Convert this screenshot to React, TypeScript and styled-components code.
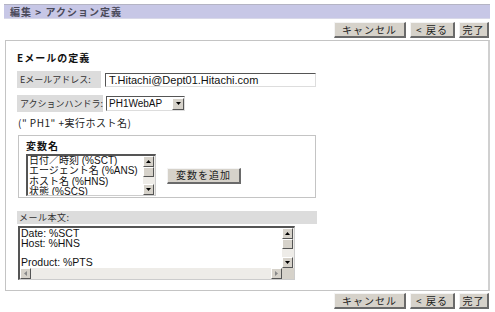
import React from "react";
import styled, { createGlobalStyle } from "styled-components";

const Global = createGlobalStyle`
  html, body { margin: 0; padding: 0; background: #fff; }
  body { font-family: "Liberation Sans", "Noto Sans CJK JP", sans-serif; font-size: 11px; color: #222; }
`;

const Page = styled.div`
  width: 495px;
  height: 312px;
  padding: 4px 5px 0 4px;
  box-sizing: border-box;
  display: flex;
  flex-direction: column;
`;

const Header = styled.div`
  height: 15px;
  background: #c7c7e6;
  border-top: 1px solid #b4b4c4;
  border-bottom: 1px solid #d8d8e8;
  display: flex;
  align-items: center;
  padding-left: 6px;
  font-family: "Noto Sans CJK JP", sans-serif;
  font-size: 10px;
  font-weight: bold;
  color: #4a4a5a;
  letter-spacing: 1px;
  white-space: nowrap;
  box-sizing: border-box;
`;

const Toolbar = styled.div<{ top?: number }>`
  display: flex;
  justify-content: flex-end;
  gap: 4px;
  padding-right: 1px;
  margin-top: ${(p) => p.top ?? 3}px;
`;

const Btn = styled.button<{ w: number }>`
  width: ${(p) => p.w}px;
  height: 16px;
  padding: 0;
  background: #d6d2ca;
  border-top: 1px solid #f4f4f4;
  border-left: 1px solid #f4f4f4;
  border-right: 2px solid #6a6a6a;
  border-bottom: 2px solid #6a6a6a;
  font-family: "Noto Sans CJK JP", sans-serif;
  font-size: 10px;
  color: #222;
  line-height: 12px;
  letter-spacing: 1px;
  white-space: nowrap;
`;

const Panel = styled.div`
  margin-top: 2px;
  margin-left: 1px;
  height: 251px;
  border: 1px solid #c4c4c4;
  border-right: 2px solid #d0d0d0;
  box-sizing: border-box;
  padding: 10px 0 0 11px;
  display: flex;
  flex-direction: column;
`;

const Title = styled.div`
  font-family: "Noto Sans CJK JP", sans-serif;
  font-weight: bold;
  font-size: 10px;
  letter-spacing: 1px;
  color: #111;
  height: 14px;
  line-height: 14px;
  white-space: nowrap;
`;

const FieldRow = styled.div<{ mt: number }>`
  display: flex;
  align-items: center;
  margin-top: ${(p) => p.mt}px;
`;

const Label = styled.div<{ w: number; h: number }>`
  width: ${(p) => p.w}px;
  height: ${(p) => p.h}px;
  background: #dcdcdc;
  display: flex;
  align-items: center;
  padding-left: 3px;
  box-sizing: border-box;
  font-family: "Noto Sans CJK JP", sans-serif;
  font-size: 9px;
  letter-spacing: 0;
  white-space: nowrap;
  color: #333;
`;

const TextInput = styled.div`
  margin-left: 4px;
  width: 211px;
  height: 14px;
  border-top: 1px solid #555;
  border-left: 1px solid #555;
  border-right: 1px solid #ddd;
  border-bottom: 1px solid #ddd;
  box-sizing: border-box;
  padding-left: 3px;
  font-size: 11px;
  line-height: 12px;
  color: #111;
  white-space: nowrap;
`;

const Select = styled.div`
  margin-left: 3px;
  width: 79px;
  height: 15px;
  border-top: 1px solid #555;
  border-left: 1px solid #555;
  border-right: 1px solid #ddd;
  border-bottom: 1px solid #ddd;
  box-sizing: border-box;
  display: flex;
  align-items: center;
  justify-content: space-between;
  padding-left: 2px;
  font-size: 10px;
  color: #111;
  white-space: nowrap;
`;

const ArrowBtn = styled.div<{ w?: number; h?: number }>`
  width: ${(p) => p.w ?? 11}px;
  height: ${(p) => p.h ?? 11}px;
  background: #d6d2ca;
  border-top: 1px solid #fff;
  border-left: 1px solid #fff;
  border-right: 1px solid #555;
  border-bottom: 1px solid #555;
  box-sizing: border-box;
  display: flex;
  align-items: center;
  justify-content: center;
  flex-shrink: 0;
`;

const Note = styled.div`
  margin-top: 3px;
  margin-left: 1px;
  font-family: "Noto Sans CJK JP", sans-serif;
  font-size: 10px;
  letter-spacing: 0.5px;
  color: #222;
  white-space: nowrap;
`;

const VarBox = styled.div`
  margin-top: 5px;
  margin-left: 1px;
  width: 298px;
  height: 63px;
  border: 1px solid #c4c4c4;
  box-sizing: border-box;
  padding: 3px 0 0 7px;
`;

const VarRow = styled.div`
  display: flex;
  align-items: center;
  gap: 11px;
`;

const ListBox = styled.div`
  width: 130px;
  height: 42px;
  border-top: 2px solid #555;
  border-left: 2px solid #555;
  border-right: 1px solid #ccc;
  border-bottom: 1px solid #ccc;
  box-sizing: border-box;
  display: flex;
  margin-top: 1px;
`;

const ListItems = styled.div`
  flex: 1;
  padding-left: 1px;
  font-size: 10px;
  line-height: 10.3px;
  color: #111;
  overflow: hidden;
  white-space: nowrap;
`;

const VScroll = styled.div`
  width: 12px;
  background: #eeece8;
  display: flex;
  flex-direction: column;
  justify-content: space-between;
  position: relative;
`;

const Thumb = styled.div<{ top: number }>`
  position: absolute;
  left: 0;
  top: ${(p) => p.top}px;
  width: 11px;
  height: 10px;
  background: #d6d2ca;
  border-top: 1px solid #fff;
  border-left: 1px solid #fff;
  border-right: 1px solid #555;
  border-bottom: 1px solid #555;
  box-sizing: border-box;
`;

const AddBtn = styled(Btn)`
  margin-top: 2px;
`;

const BodyLabel = styled.div`
  margin-top: 13px;
  width: 300px;
  height: 13px;
  background: #dcdcdc;
  padding-left: 2px;
  box-sizing: border-box;
  font-family: "Noto Sans CJK JP", sans-serif;
  font-size: 9px;
  line-height: 13px;
  letter-spacing: 0.5px;
  color: #333;
  white-space: nowrap;
`;

const TextArea = styled.div`
  margin-top: 2px;
  margin-left: 1px;
  width: 277px;
  height: 54px;
  border-top: 2px solid #555;
  border-left: 2px solid #555;
  border-right: 1px solid #ccc;
  border-bottom: 1px solid #ccc;
  box-sizing: border-box;
  display: grid;
  grid-template-columns: 1fr 12px;
  grid-template-rows: 1fr 11px;
`;

const AreaText = styled.div`
  padding: 1px 0 0 1px;
  font-size: 10.5px;
  line-height: 9.5px;
  color: #111;
  white-space: pre;
  overflow: hidden;
`;

const HScroll = styled.div`
  background: #eeece8;
  display: flex;
  justify-content: space-between;
`;

const Corner = styled.div`
  background: #d6d2ca;
`;

const Up = () => (
  <svg width="5" height="3" viewBox="0 0 5 3"><path d="M2.5 0L5 3H0z" fill="#000" /></svg>
);
const Down = () => (
  <svg width="5" height="3" viewBox="0 0 5 3"><path d="M0 0H5L2.5 3z" fill="#000" /></svg>
);
const Left = () => (
  <svg width="3" height="5" viewBox="0 0 3 5"><path d="M0 2.5L3 0V5z" fill="#888" /></svg>
);
const Right = () => (
  <svg width="3" height="5" viewBox="0 0 3 5"><path d="M0 0L3 2.5L0 5z" fill="#888" /></svg>
);

const Buttons = ({ top }: { top?: number }) => (
  <Toolbar top={top}>
    <Btn w={72}>キャンセル</Btn>
    <Btn w={45}>&lt; 戻る</Btn>
    <Btn w={30}>完了</Btn>
  </Toolbar>
);

export default function App() {
  return (
    <>
      <Global />
      <Page>
        <Header>編集 &gt; アクション定義</Header>
        <Buttons />
        <Panel>
          <Title>Eメールの定義</Title>
          <FieldRow mt={6}>
            <Label w={84} h={17}>Eメールアドレス:</Label>
            <TextInput>T.Hitachi@Dept01.Hitachi.com</TextInput>
          </FieldRow>
          <FieldRow mt={7}>
            <Label w={86} h={17}>アクションハンドラ:</Label>
            <Select>
              PH1WebAP
              <ArrowBtn w={12} h={12}><Down /></ArrowBtn>
            </Select>
          </FieldRow>
          <Note>(" PH1" +実行ホスト名)</Note>
          <VarBox>
            <Title>変数名</Title>
            <VarRow>
              <ListBox>
                <ListItems>
                  日付／時刻 (%SCT)<br />
                  エージェント名 (%ANS)<br />
                  ホスト名 (%HNS)<br />
                  状態 (%SCS)
                </ListItems>
                <VScroll>
                  <ArrowBtn><Up /></ArrowBtn>
                  <Thumb top={11} />
                  <ArrowBtn><Down /></ArrowBtn>
                </VScroll>
              </ListBox>
              <AddBtn w={74}>変数を追加</AddBtn>
            </VarRow>
          </VarBox>
          <BodyLabel>メール本文:</BodyLabel>
          <TextArea>
            <AreaText>{"Date: %SCT\nHost: %HNS\n\nProduct: %PTS"}</AreaText>
            <VScroll>
              <ArrowBtn><Up /></ArrowBtn>
              <Thumb top={11} />
              <ArrowBtn><Down /></ArrowBtn>
            </VScroll>
            <HScroll>
              <ArrowBtn w={11} h={11}><Left /></ArrowBtn>
              <ArrowBtn w={11} h={11}><Right /></ArrowBtn>
            </HScroll>
            <Corner />
          </TextArea>
        </Panel>
        <Buttons top={2} />
      </Page>
    </>
  );
}
